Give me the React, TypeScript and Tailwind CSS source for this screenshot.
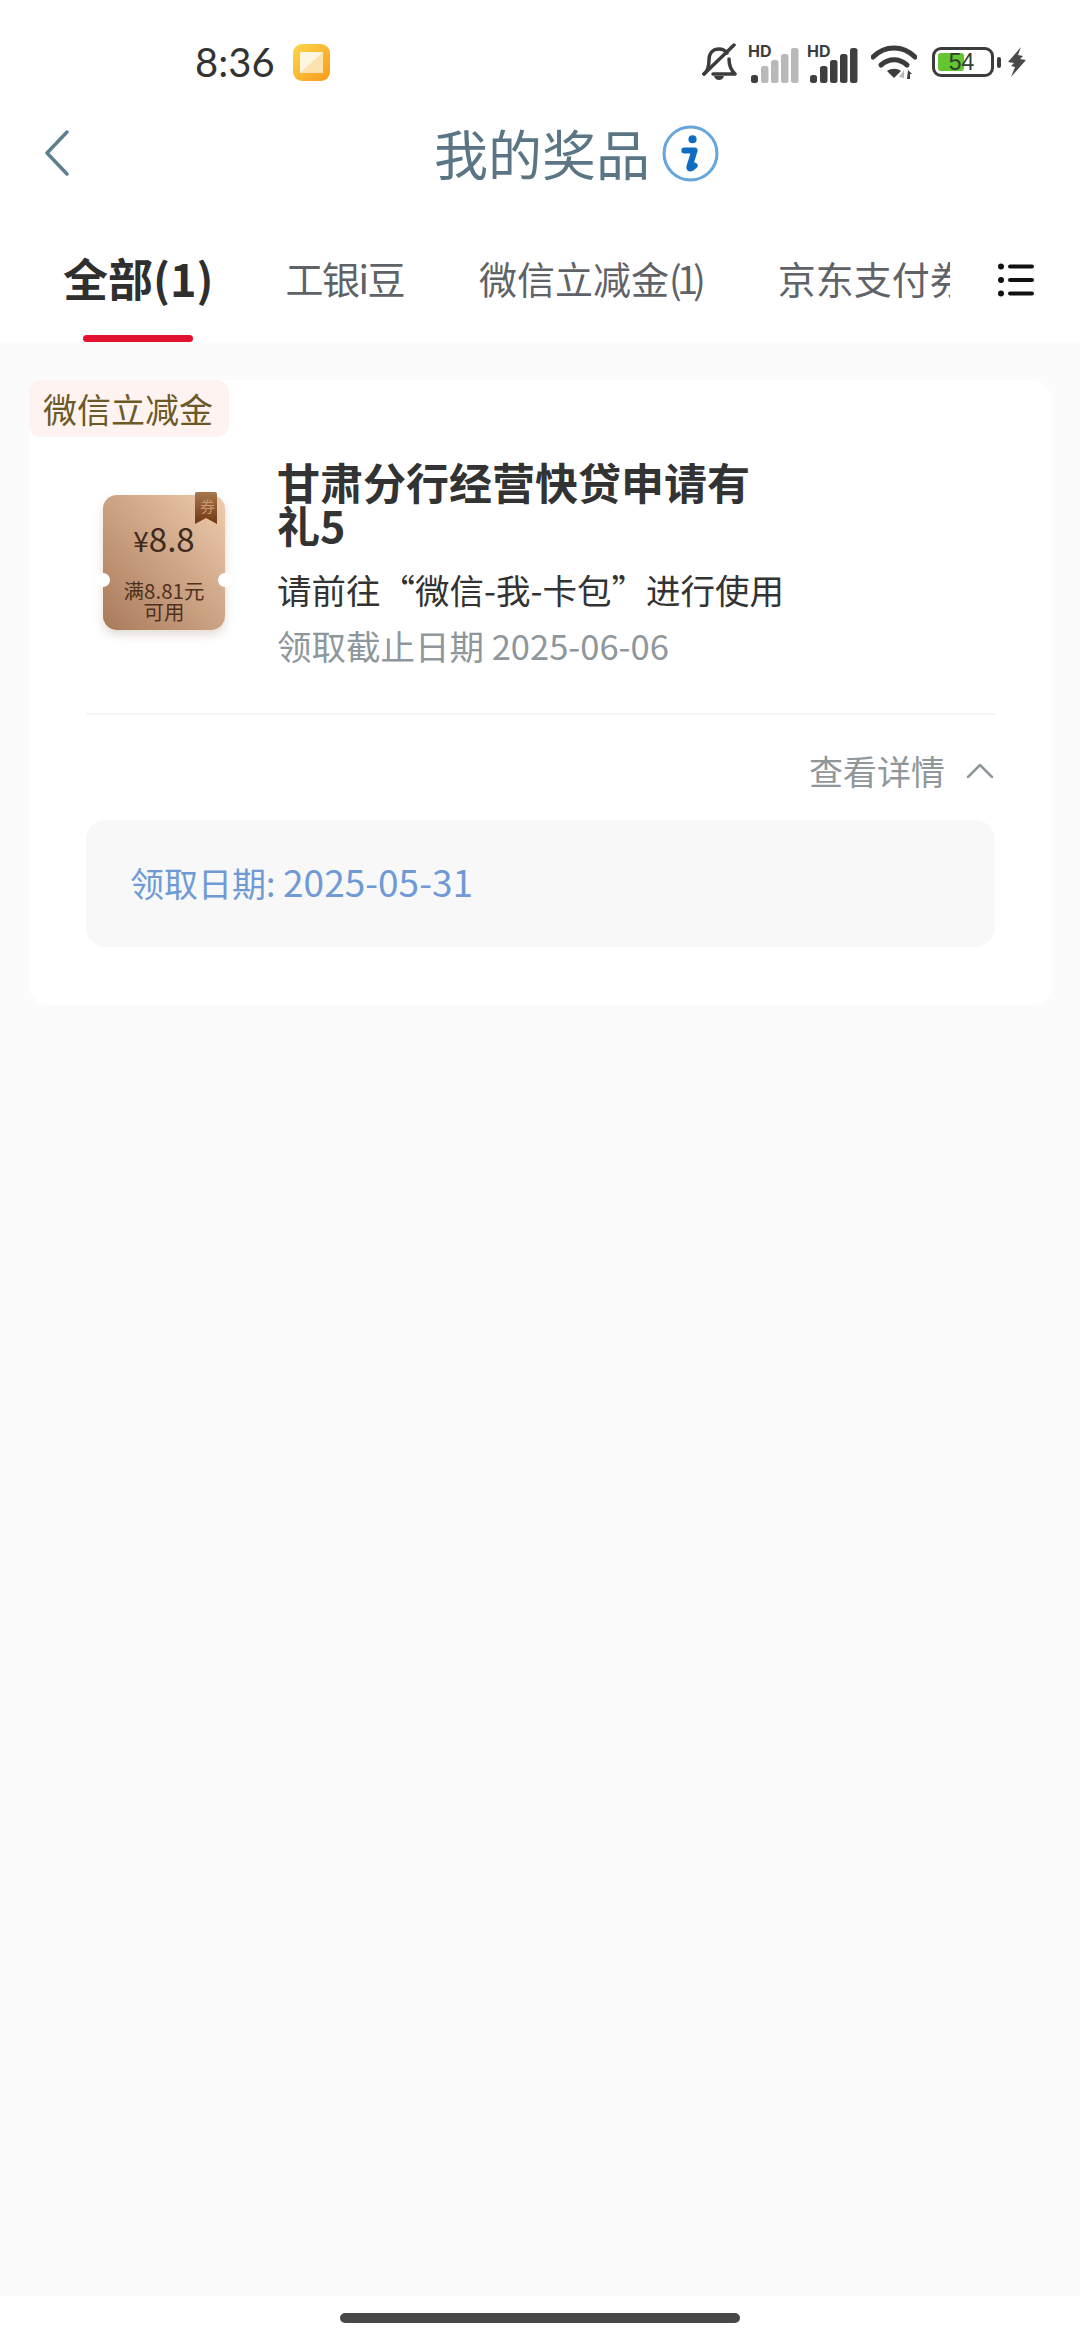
import React from "react";

const tabs = [
  { label: "工银i豆", suffix: "", cls: "ml-[72px] tracking-[-1.5px]" },
  { label: "微信立减金", suffix: "(1)", cls: "ml-[75px]" },
  { label: "京东支付券", suffix: "", cls: "ml-[73px]" },
];

function SignalBars({ dim }: { dim: boolean }) {
  const heights = [10, 17, 23, 29, 35];
  return (
    <div className="relative w-[48px] h-[36px]">
      <span className="absolute left-[-3px] top-[-5px] text-[16px] leading-[16px] font-bold text-[#3c3c3c] font-['Inter',sans-serif]">
        HD
      </span>
      <svg width="48" height="36" viewBox="0 0 48 36" className="block">
        {heights.map((h, i) => (
          <rect
            key={i}
            x={i * 10}
            y={i === 4 ? 0 : 35 - h + (i === 0 ? 2 : 0)}
            width={i === 0 ? 7 : 7.5}
            height={i === 0 ? 8 : i === 4 ? 35 : h}
            rx={2.5}
            fill={dim && i > 0 ? "#b9b9b9" : "#3f3f3f"}
          />
        ))}
      </svg>
    </div>
  );
}

function StatusIcons() {
  return (
    <div className="flex items-center">
      <svg width="36" height="38" viewBox="0 0 36 38" fill="none" className="mr-[14px]">
        <path
          d="M3 31c4-3 5-7 5-14 0-7 4-11 10-11 3 0 6 1 8 4M28 16c0 7 2 11 6 15H12"
          stroke="#3c3c3c"
          strokeWidth="3.500"
          strokeLinecap="round"
          strokeLinejoin="round"
        />
        <path d="M33 2 3 31" stroke="#3c3c3c" strokeWidth="3.500" strokeLinecap="round" />
        <path d="M13 33h10c-1 3-3 4-5 4s-4-1-5-4z" fill="#3c3c3c" />
      </svg>
      <div className="mt-[8px] mr-[11px]">
        <SignalBars dim={true} />
      </div>
      <div className="mt-[8px] mr-[13px]">
        <SignalBars dim={false} />
      </div>
      <svg width="46" height="34" viewBox="0 0 46 34" fill="none" className="mr-[15px]">
        <path d="M2 12C14 0 32 0 44 12" stroke="#3c3c3c" strokeWidth="5" strokeLinecap="round" />
        <path d="M10 20c8-7 18-7 26 0" stroke="#3c3c3c" strokeWidth="5" strokeLinecap="round" />
        <path d="M16 26c4-3 10-3 14 0l-7 7z" fill="#3c3c3c" />
        <path d="M33 25v8l-5-1z" fill="#b9b9b9" />
        <path d="M37 25l4 4h-2v5h-3z" fill="#3c3c3c" />
      </svg>
      <div className="relative w-[62px] h-[30px] border-[3px] border-[#3c3c3c] rounded-[9px] p-[3px]">
        <div className="w-[26px] h-full bg-[#63c52f] rounded-[3px]" />
        <span className="absolute inset-0 flex items-center justify-center pr-[3px] text-[23px] leading-none text-[#2f3f2c] font-['Liberation_Sans',sans-serif]">
          54
        </span>
      </div>
      <div className="w-[4px] h-[11px] bg-[#3c3c3c] rounded-[2px] ml-[3px] mr-[7px]" />
      <svg width="18" height="30" viewBox="0 0 18 30">
        <path d="M13 0 0 15l6 1-3 3 4 1-4 10L18 13l-6-1 3-3-5-1z" fill="#4a4a4a" />
      </svg>
    </div>
  );
}

function Coupon() {
  return (
    <div className="relative w-[122px] h-[135px] rounded-[14px] shrink-0 bg-gradient-to-bl from-[#efcdae] to-[#a97a5a] shadow-[0_5px_10px_rgba(120,80,50,0.2)]">
      <div className="absolute left-[-7px] top-[78px] w-[14px] h-[14px] rounded-full bg-white" />
      <div className="absolute right-[-7px] top-[78px] w-[14px] h-[14px] rounded-full bg-white" />
      <svg width="22" height="32" viewBox="0 0 22 32" className="absolute right-[8px] top-[-3px]">
        <defs>
          <linearGradient id="ribbon" x1="0" y1="0" x2="0" y2="1">
            <stop offset="0" stopColor="#a9764e" />
            <stop offset="1" stopColor="#6d3712" />
          </linearGradient>
        </defs>
        <path d="M2 0h18a2 2 0 0 1 2 2v30l-11-6-11 6V2a2 2 0 0 1 2-2z" fill="url(#ribbon)" />
      </svg>
      <span className="absolute right-[10px] top-[2px] text-[15px] leading-[18px] text-[#c9986f]">券</span>
      <div className="flex flex-col items-center pt-[23px] text-[#3f2a1e]">
        <div className="text-[33px] leading-[40px] font-normal">
          <span className="text-[28px]">¥</span>8.8
        </div>
        <div className="mt-[20px] text-[20.5px] leading-[21px] font-normal text-[#4f3120] text-center">
          满8.81元
          <br />
          可用
        </div>
      </div>
    </div>
  );
}

export default function App() {
  return (
    <div className="w-[1080px] min-h-[2340px] flex flex-col bg-white font-['Noto_Sans_CJK_SC',sans-serif]">
      {/* status bar */}
      <div className="h-[124px] flex items-center justify-between pl-[195px] pr-[54px]">
        <div className="flex items-center">
          <span className="text-[40px] leading-none text-[#333] font-['Lato',sans-serif]">8:36</span>
          <svg width="37" height="37" viewBox="0 0 37 37" className="ml-[18px]">
            <defs>
              <linearGradient id="gallery" x1="0" y1="0" x2="1" y2="1">
                <stop offset="0" stopColor="#fcd84c" />
                <stop offset="1" stopColor="#f99a1c" />
              </linearGradient>
            </defs>
            <rect width="37" height="37" rx="9" fill="url(#gallery)" />
            <rect x="7" y="8" width="23" height="21" fill="#fde3b0" />
            <path d="M7 29 30 8H7z" fill="#fff6e2" />
          </svg>
        </div>
        <StatusIcons />
      </div>

      {/* nav */}
      <div className="relative h-[58px] flex items-center justify-center">
        <svg width="26" height="46" viewBox="0 0 26 46" fill="none" className="absolute left-[44px] top-[6px]">
          <path d="M23 2 3 23l20 21" stroke="#5f7f91" strokeWidth="3.500" strokeLinecap="round" strokeLinejoin="round" />
        </svg>
        <div className="flex items-center ml-[73px]">
          <span className="text-[54px] leading-[58px] text-[#5b7585]">我的奖品</span>
          <svg width="57" height="57" viewBox="0 0 56 56" fill="none" className="ml-[12px]">
            <circle cx="28" cy="28" r="26" fill="#fff" stroke="#66a6dc" strokeWidth="3" />
            <circle cx="30" cy="14" r="4" fill="#0f6cc0" />
            <path
              d="M22 25h10l-5 16c-.5 2 1 3 5-1"
              stroke="#0f6cc0"
              strokeWidth="6"
              strokeLinecap="round"
              strokeLinejoin="round"
            />
          </svg>
        </div>
      </div>

      {/* tabs */}
      <div className="mt-[44px] h-[116px] flex">
        <div className="w-[950px] overflow-hidden flex pl-[63px]">
          <div className="flex flex-col items-center shrink-0">
            <span className="text-[45px] leading-[103px] font-bold text-[#2f2f2f]">全部(1)</span>
            <div className="mt-[6px] w-[110px] h-[8px] rounded-full bg-[#e0122f]" />
          </div>
          {tabs.map((t, i) => (
            <span
              key={i}
              className={`shrink-0 text-[38px] leading-[103px] text-[#5f6368] whitespace-nowrap ${t.cls}`}>
              {t.label}
              {t.suffix && <span className="tracking-[-5px] pr-[4px]">{t.suffix}</span>}
            </span>
          ))}
        </div>
        <div className="ml-[48px] h-[107px] flex items-center">
          <svg width="36" height="34" viewBox="0 0 36 34">
            <circle cx="3" cy="3.500" r="3" fill="#111" />
            <circle cx="3" cy="17" r="3" fill="#111" />
            <circle cx="3" cy="30.500" r="3" fill="#111" />
            <rect x="10" y="1.500" width="26" height="4" rx="2" fill="#111" />
            <rect x="10" y="15" width="26" height="4" rx="2" fill="#111" />
            <rect x="10" y="28.500" width="26" height="4" rx="2" fill="#111" />
          </svg>
        </div>
      </div>

      {/* list */}
      <div className="flex-1 bg-[#fbfbfb] pt-[38px] pl-[29px] pr-[28px]">
        <div className="relative bg-white rounded-[20px] h-[625px] px-[57px]">
          <div className="absolute left-0 top-0 h-[57px] w-[200px] flex items-center justify-center pr-[2px] bg-[#fff3f1] rounded-[12px] text-[34px] leading-none text-[#6b5a26]">
            微信立减金
          </div>
          <div className="flex pt-[80px] pl-[17px] h-[335px] border-b-2 border-[#f5f5f5]">
            <div className="pt-[35px]">
              <Coupon />
            </div>
            <div className="ml-[52px] w-[520px]">
              <div className="w-[490px] text-[43px] leading-[43px] font-bold text-[#333]">甘肃分行经营快贷申请有礼5</div>
              <div className="mt-[19px] text-[34.5px] leading-[48px] text-[#333]">请前往“微信-我-卡包”进行使用</div>
              <div className="mt-[8px] text-[34.5px] leading-[48px] text-[#8d979c]">领取截止日期 2025-06-06</div>
            </div>
          </div>
          <div className="h-[105px] flex items-center justify-end pr-[1px] pt-[6px]">
            <span className="text-[34px] leading-none text-[#8f979b]">查看详情</span>
            <svg width="28" height="16" viewBox="0 0 28 16" fill="none" className="ml-[21px]">
              <path d="M2 14 14 2l12 12" stroke="#8f979b" strokeWidth="2.500" strokeLinecap="round" strokeLinejoin="round" />
            </svg>
          </div>
          <div className="h-[127px] bg-[#f8f8f8] rounded-[20px] flex items-center pl-[44px] pb-[4px] text-[34px] leading-none text-[#6f9ad6]">
            <span>
              领取日期: <span className="text-[37px]">2025-05-31</span>
            </span>
          </div>
        </div>
      </div>

      {/* gesture bar */}
      <div className="h-[44px] flex justify-center pt-[17px] bg-white">
        <div className="w-[400px] h-[10px] rounded-full bg-[#484848]" />
      </div>
    </div>
  );
}
